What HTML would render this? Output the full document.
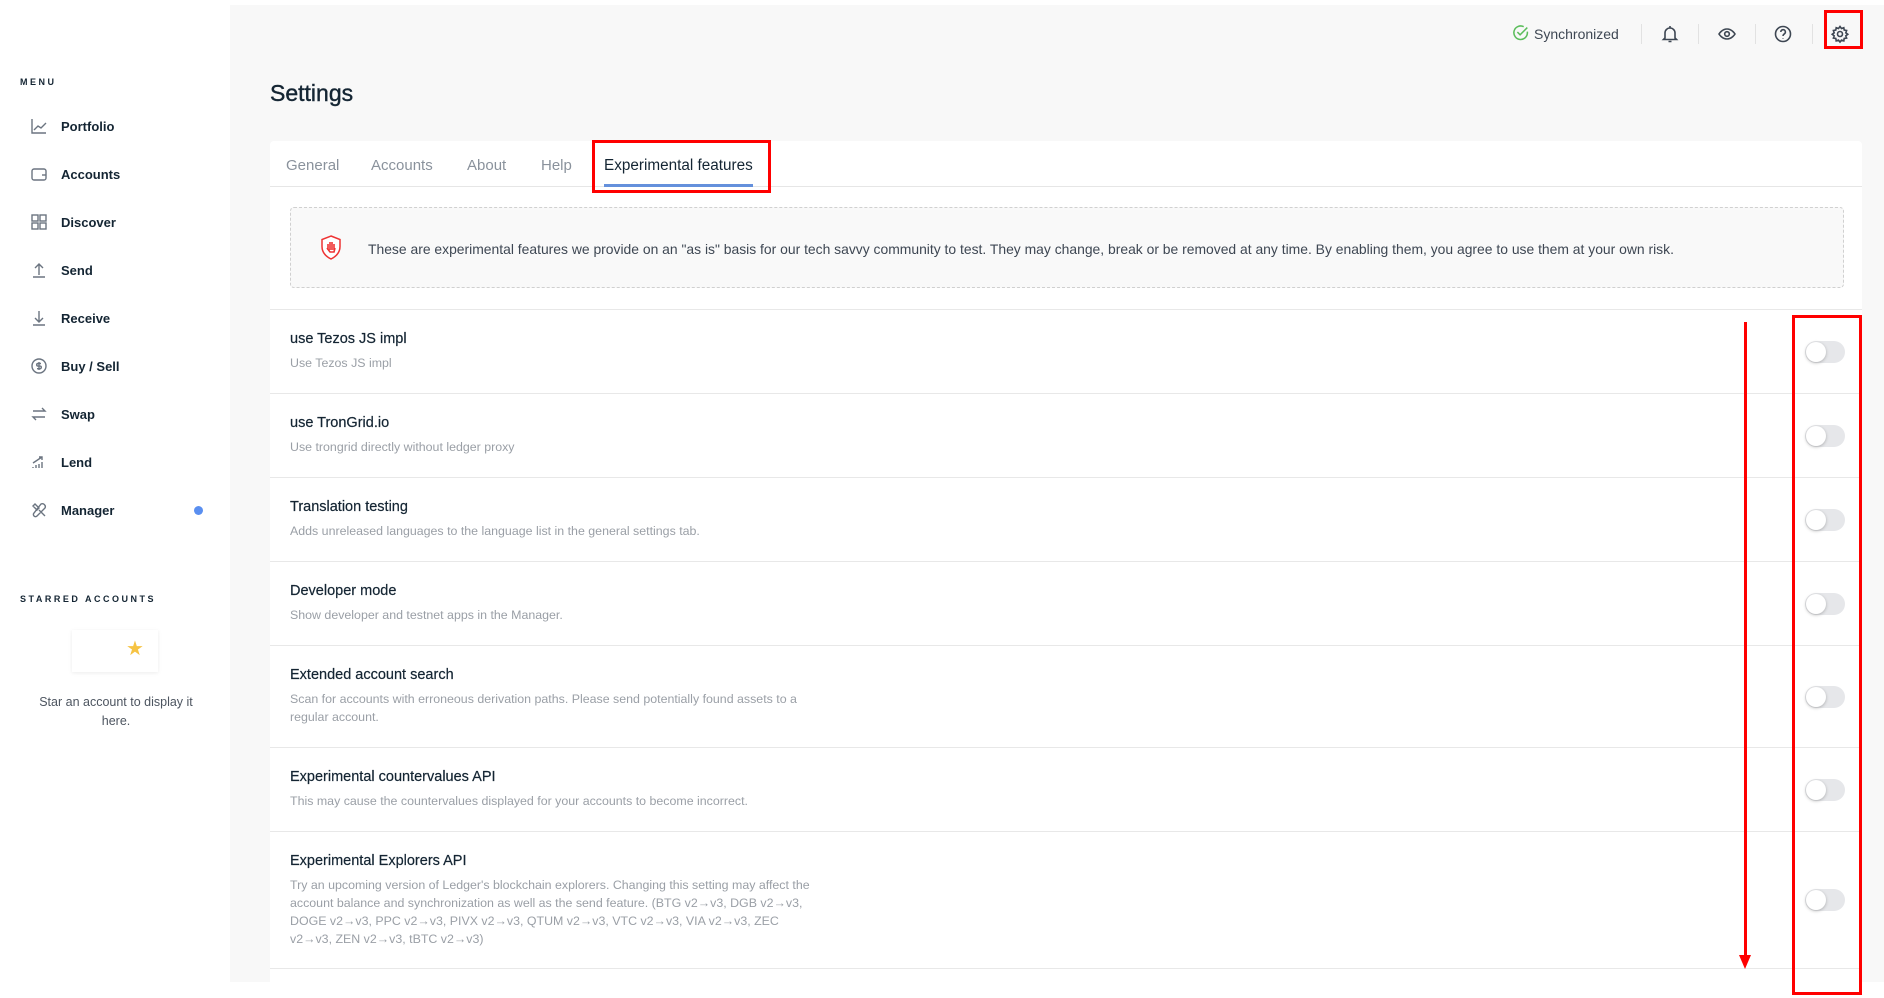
<!DOCTYPE html>
<html><head><meta charset="utf-8"><style>
*{box-sizing:border-box;margin:0;padding:0}
body{width:1884px;height:982px;overflow:hidden;font-family:"Liberation Sans",sans-serif;background:#fff;position:relative;color:#142533}
.side{position:absolute;left:0;top:0;width:230px;height:982px;background:#fff}
.main{position:absolute;left:230px;top:5px;right:0;bottom:0;background:#f8f8f8}
.menu{position:absolute;left:20px;font-size:9px;font-weight:bold;letter-spacing:2.5px;color:#142533}
.item{position:absolute;left:30px;height:20px;display:flex;align-items:center;font-size:13px;color:#142533;font-weight:bold}
.item svg{width:18px;height:18px;margin-right:13px;stroke:#6b7480;fill:none;stroke-width:1.4}
.abs{position:absolute}
.card{position:absolute;left:270px;top:141px;width:1592px;height:850px;background:#fff;border-radius:4px}
.tabs{position:absolute;left:0;top:0;width:100%;height:46px;border-bottom:1px solid #e6e6e6}
.tab{position:absolute;top:16px;font-size:15px;color:#8a929c}
.row{position:absolute;left:0;width:100%;border-top:1px solid #e8e8e8}
.t{position:absolute;left:20px;font-size:14.5px;color:#142533;-webkit-text-stroke:0.2px #142533}
.d{position:absolute;left:20px;font-size:12.4px;color:#9a9fa6;line-height:18px;width:530px}
.tg{position:absolute;left:1535px;width:40px;height:22px;border-radius:11px;background:#e6e7ea}
.tg::after{content:"";position:absolute;left:1px;top:1px;width:20px;height:20px;border-radius:50%;background:#fff;box-shadow:0 1px 3px rgba(0,0,0,.25)}
.hi{position:absolute;top:24px;width:20px;height:20px;stroke:#3e4753;fill:none;stroke-width:1.6}
.sep{position:absolute;top:24px;width:1px;height:20px;background:#e2e2e2}
</style></head><body>
<div class="side">
<div class="menu" style="top:77px">MENU</div>
<div class="item" style="top:116px"><svg viewBox="0 0 18 18"><path d="M2 2v14h14M4 13l4-4 3 2 5-5"/></svg>Portfolio</div>
<div class="item" style="top:164px"><svg viewBox="0 0 18 18"><rect x="2" y="4" width="14" height="11" rx="2"/><path d="M12 10h4"/></svg>Accounts</div>
<div class="item" style="top:212px"><svg viewBox="0 0 18 18"><rect x="2" y="2" width="6" height="6"/><rect x="10" y="2" width="6" height="6"/><rect x="2" y="10" width="6" height="6"/><rect x="10" y="10" width="6" height="6"/></svg>Discover</div>
<div class="item" style="top:260px"><svg viewBox="0 0 18 18"><path d="M9 14V3M5 7l4-4 4 4M3 16h12"/></svg>Send</div>
<div class="item" style="top:308px"><svg viewBox="0 0 18 18"><path d="M9 2v11M5 9l4 4 4-4M3 16h12"/></svg>Receive</div>
<div class="item" style="top:356px"><svg viewBox="0 0 18 18"><circle cx="9" cy="9" r="7"/><path d="M11 6.5H8a1.3 1.3 0 000 2.6h2a1.3 1.3 0 010 2.6H7M9 5v8"/></svg>Buy / Sell</div>
<div class="item" style="top:404px"><svg viewBox="0 0 18 18"><path d="M3 6h12l-3-3M15 12H3l3 3"/></svg>Swap</div>
<div class="item" style="top:452px"><svg viewBox="0 0 18 18"><path d="M3 15v-1M6 15v-3M9 15v-4M12 15v-6M3 10l9-6M9 4h3v3"/></svg>Lend</div>
<div class="item" style="top:500px"><svg viewBox="0 0 18 18"><path d="M3 5l2-2 4 4-2 2zM9 9l6 6M11 3a3 3 0 014 4l-8 8a2 2 0 01-3-3z"/></svg>Manager</div>
<div class="abs" style="left:194px;top:506px;width:9px;height:9px;border-radius:50%;background:#5a8ff0"></div>
<div class="menu" style="top:594px">STARRED ACCOUNTS</div>
<div class="abs" style="left:72px;top:630px;width:86px;height:42px;background:#fff;box-shadow:0 1px 4px rgba(0,0,0,.08)"></div>
<div class="abs" style="left:126px;top:636px;color:#f6c343;font-size:20px">★</div>
<div class="abs" style="left:30px;top:693px;width:172px;text-align:center;font-size:12.5px;line-height:19px;color:#4d5560">Star an account to display it here.</div>
</div>
<div class="main"></div>
<div class="abs" style="left:1512px;top:24px;width:20px;height:20px"><svg viewBox="0 0 20 20" width="18" height="18" fill="none" stroke="#5bbd5b" stroke-width="1.7"><path d="M17 8.5A7.5 7.5 0 1113 3"/><path d="M6 9l3 3 8-8"/></svg></div>
<div class="abs" style="left:1534px;top:26px;font-size:14px;color:#3e4753">Synchronized</div>
<div class="sep" style="left:1641px"></div>
<svg class="hi" style="left:1660px" viewBox="0 0 20 20"><path d="M5 14V9a5 5 0 0110 0v5l1.5 1.5h-13zM8.5 17.5h3M10 2v2"/></svg>
<div class="sep" style="left:1698px"></div>
<svg class="hi" style="left:1717px" viewBox="0 0 20 20"><path d="M2 10s3-5 8-5 8 5 8 5-3 5-8 5-8-5-8-5z"/><circle cx="10" cy="10" r="2.3"/></svg>
<div class="sep" style="left:1755px"></div>
<svg class="hi" style="left:1773px" viewBox="0 0 20 20"><circle cx="10" cy="10" r="7.5"/><path d="M7.8 8a2.3 2.3 0 114 1.5c-1 .8-1.8 1.2-1.8 2.5M10 14v.5"/></svg>
<div class="sep" style="left:1812px"></div>
<svg class="hi" style="left:1830px" viewBox="0 0 20 20"><circle cx="10" cy="10" r="2.5"/><path d="M10 2.5l1.5 2 2.3-.8.4 2.4 2.4.4-.8 2.3 2 1.5-2 1.5.8 2.3-2.4.4-.4 2.4-2.3-.8-1.5 2-1.5-2-2.3.8-.4-2.4-2.4-.4.8-2.3-2-1.5 2-1.5-.8-2.3 2.4-.4.4-2.4 2.3.8z"/></svg>
<div class="abs" style="left:1824px;top:10px;width:39px;height:39px;border:3px solid #f00"></div>
<div class="abs" style="left:270px;top:80px;font-size:23px;color:#142533;-webkit-text-stroke:0.4px #142533">Settings</div>
<div class="card">
<div class="tabs">
<div class="tab" style="left:16px">General</div>
<div class="tab" style="left:101px">Accounts</div>
<div class="tab" style="left:197px">About</div>
<div class="tab" style="left:271px">Help</div>
<div class="tab" style="left:334px;color:#142533;font-size:15.3px">Experimental features</div>
<div class="abs" style="left:334px;top:43px;width:149px;height:3px;background:#6490dc"></div>
</div>
<div class="abs" style="left:20px;top:66px;width:1554px;height:81px;border:1px dashed #d0d0d0;border-radius:4px;background:#f9f9f9">
<svg class="abs" style="left:28px;top:26px" width="24" height="28" viewBox="0 0 24 28"><path d="M12 2l9 3.5v7c0 6-4 10-9 12.5C7 22.5 3 18.5 3 12.5v-7z" fill="#fff" stroke="#e33" stroke-width="1.5"/><path d="M9 16v-6M11 16V8M13 16V8M15 16v-6M8 14l3 4h4l1-4" stroke="#e33" stroke-width="1.6" fill="none"/></svg>
<div class="abs" style="left:77px;top:33px;font-size:13.9px;color:#3e4753;white-space:nowrap">These are experimental features we provide on an "as is" basis for our tech savvy community to test. They may change, break or be removed at any time. By enabling them, you agree to use them at your own risk.</div>
</div>
<div class="row" style="top:168px;height:84px"><div class="t" style="top:21px">use Tezos JS impl</div><div class="d" style="top:44px">Use Tezos JS impl</div><div class="tg" style="top:31px"></div></div>
<div class="row" style="top:252px;height:84px"><div class="t" style="top:21px">use TronGrid.io</div><div class="d" style="top:44px">Use trongrid directly without ledger proxy</div><div class="tg" style="top:31px"></div></div>
<div class="row" style="top:336px;height:84px"><div class="t" style="top:21px">Translation testing</div><div class="d" style="top:44px">Adds unreleased languages to the language list in the general settings tab.</div><div class="tg" style="top:31px"></div></div>
<div class="row" style="top:420px;height:84px"><div class="t" style="top:21px">Developer mode</div><div class="d" style="top:44px">Show developer and testnet apps in the Manager.</div><div class="tg" style="top:31px"></div></div>
<div class="row" style="top:504px;height:102px"><div class="t" style="top:21px">Extended account search</div><div class="d" style="top:44px">Scan for accounts with erroneous derivation paths. Please send potentially found assets to a regular account.</div><div class="tg" style="top:40px"></div></div>
<div class="row" style="top:606px;height:84px"><div class="t" style="top:21px">Experimental countervalues API</div><div class="d" style="top:44px">This may cause the countervalues displayed for your accounts to become incorrect.</div><div class="tg" style="top:31px"></div></div>
<div class="row" style="top:690px;height:137px"><div class="t" style="top:21px">Experimental Explorers API</div><div class="d" style="top:44px">Try an upcoming version of Ledger's blockchain explorers. Changing this setting may affect the account balance and synchronization as well as the send feature. (BTG v2→v3, DGB v2→v3, DOGE v2→v3, PPC v2→v3, PIVX v2→v3, QTUM v2→v3, VTC v2→v3, VIA v2→v3, ZEC v2→v3, ZEN v2→v3, tBTC v2→v3)</div><div class="tg" style="top:57px"></div></div>
<div class="row" style="top:827px;height:30px"></div>
</div>
<div class="abs" style="left:592px;top:140px;width:179px;height:53px;border:3px solid #f00"></div>
<div class="abs" style="left:1744px;top:322px;width:3px;height:640px;background:#f00"></div>
<div class="abs" style="left:1739px;top:955px;width:0;height:0;border-left:6px solid transparent;border-right:6px solid transparent;border-top:14px solid #f00"></div>
<div class="abs" style="left:1792px;top:315px;width:70px;height:680px;border:3px solid #f00"></div>
</body></html>
